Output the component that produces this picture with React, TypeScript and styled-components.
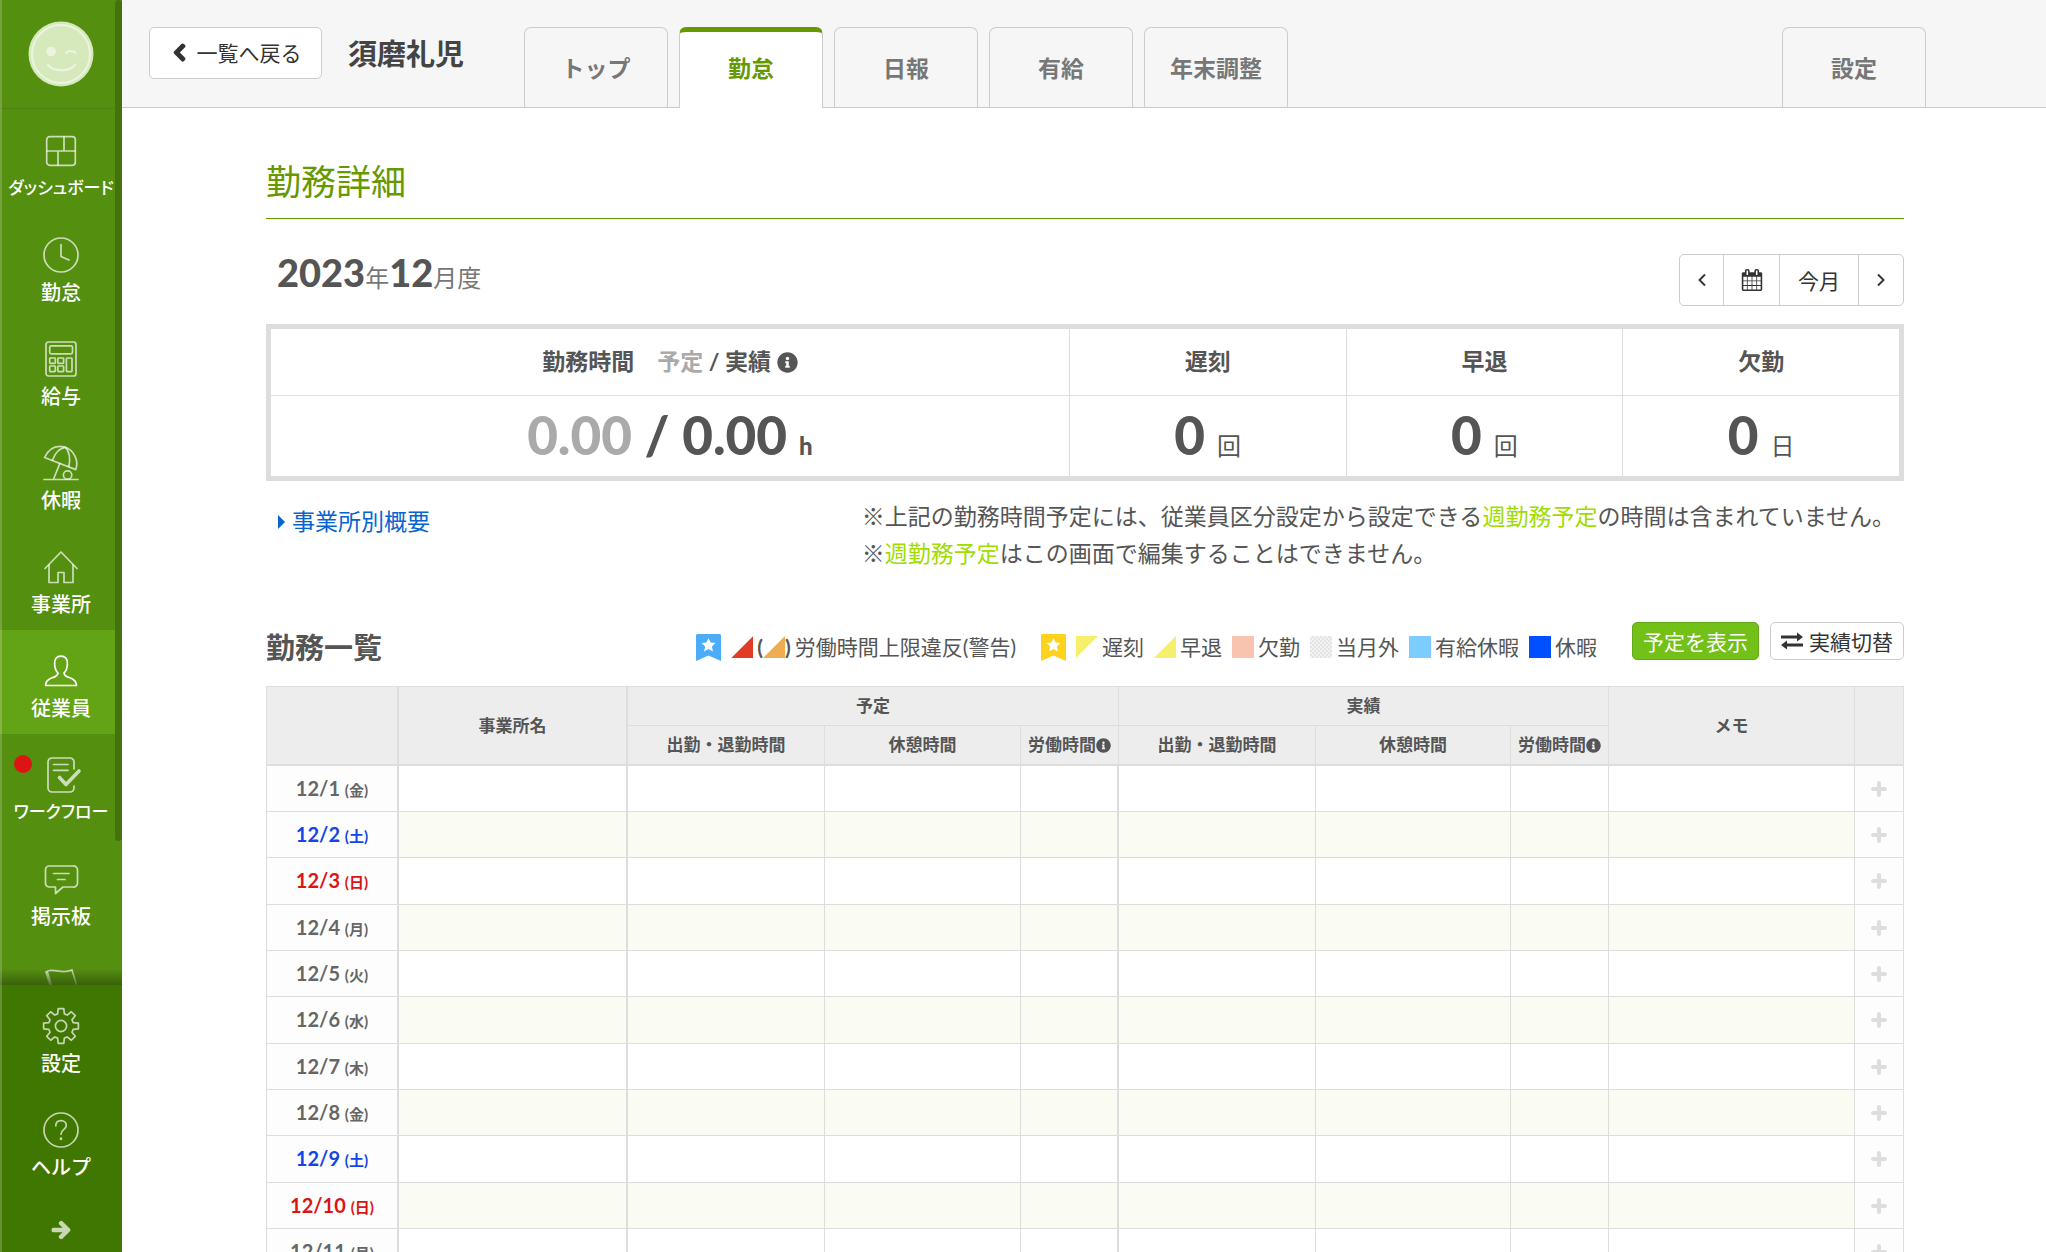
import React from 'react';
import styled, { createGlobalStyle, css } from 'styled-components';
import { FaArrowRight, FaChevronLeft, FaInfoCircle } from 'react-icons/fa';

const color = {
  text: '#555',
  muted: '#aaa',
  line: '#ddd',
  border: '#ccc',
  green: '#690',
  lime: '#9fdc00',
  link: '#0664d0',
  side: '#548f10',
  sideActive: '#63a316',
  sideDark: '#407700',
};

const GlobalStyle = createGlobalStyle`
  *, *::before, *::after { box-sizing: border-box; }
  body {
    margin: 0;
    background: #fff;
    color: ${color.text};
    font-family: Lato, "Noto Sans CJK JP", sans-serif;
    font-size: 23px;
  }
  button { font-family: inherit; cursor: pointer; }
  a { text-decoration: none; }
`;

/* ---------- shell ---------- */

const Shell = styled.div`
  display: flex;
  height: 100vh;
  overflow: hidden;
`;

const Page = styled.div`
  flex: 1;
  min-width: 0;
  display: flex;
  flex-direction: column;
`;

/* ---------- sidebar ---------- */

const Sidebar = styled.aside`
  position: relative;
  flex: none;
  width: 122px;
  display: flex;
  flex-direction: column;
  background: ${color.side};
  &::after {
    content: '';
    position: absolute;
    inset: 0 auto 0 0;
    width: 2px;
    background: rgba(255, 255, 255, 0.2);
  }
`;

const ScrollThumb = styled.div`
  position: absolute;
  top: 0;
  right: 0;
  width: 7px;
  height: 841px;
  border-radius: 4px;
  background: #44720f;
`;

const Brand = styled.a`
  flex: none;
  display: flex;
  justify-content: center;
  height: 109px;
  padding-top: 21px;
  border-bottom: 1px solid #4b8110;
`;

const Nav = styled.nav`
  flex: 1;
  min-height: 0;
  overflow: hidden;
  padding-top: 1px;
`;

const NavBottom = styled.nav`
  position: relative;
  flex: none;
  background: ${color.sideDark};
  &::before {
    content: '';
    position: absolute;
    left: 0;
    right: 0;
    bottom: 100%;
    height: 16px;
    background: linear-gradient(rgba(50, 90, 10, 0), rgba(50, 85, 10, 0.8));
  }
`;

const NavItem = styled.a<{ $active?: boolean }>`
  position: relative;
  display: flex;
  flex-direction: column;
  align-items: center;
  gap: 7px;
  height: 104px;
  padding-top: 23px;
  color: #fff;
  font-size: 20px;
  font-weight: 500;
  line-height: 24px;
  white-space: nowrap;
  background: ${(p) => (p.$active ? color.sideActive : 'transparent')};
  svg { color: ${(p) => (p.$active ? '#fff' : 'rgba(255, 255, 255, 0.7)')}; }
`;

const NavLabel = styled.span<{ $kana?: boolean }>`
  ${(p) =>
    p.$kana &&
    css`
      font-size: 17px;
      font-feature-settings: 'palt';
    `}
`;

const Dot = styled.span`
  position: absolute;
  top: 21px;
  left: 14px;
  width: 18px;
  height: 18px;
  border-radius: 50%;
  background: #dc1414;
`;

const Expand = styled.button`
  display: flex;
  align-items: center;
  justify-content: center;
  width: 100%;
  height: 59px;
  padding: 15px 0 0;
  border: 0;
  background: none;
  color: #c9d8b5;
  font-size: 20px;
  svg { overflow: visible; stroke: currentColor; stroke-width: 36; }
`;

const LineIcon = styled.svg.attrs({ viewBox: '0 0 36 36', 'aria-hidden': true })`
  flex: none;
  width: 36px;
  height: 36px;
  overflow: visible;
  fill: none;
  stroke: currentColor;
  stroke-width: 1.7;
  stroke-linejoin: round;
  stroke-linecap: round;
`;

const gearPath = (() => {
  const pts: string[] = [];
  for (let i = 0; i < 8; i += 1) {
    const base = (i * Math.PI) / 4 - Math.PI / 2;
    [
      [-0.27, 12.6],
      [-0.16, 17.6],
      [0.16, 17.6],
      [0.27, 12.6],
    ].forEach(([a, r]) => {
      pts.push(`${(18 + r * Math.cos(base + a)).toFixed(2)} ${(18 + r * Math.sin(base + a)).toFixed(2)}`);
    });
  }
  return `M${pts.join('L')}Z`;
})();

const icons = {
  dashboard: (
    <LineIcon>
      <rect x="3.7" y="3.7" width="28.6" height="28.6" rx="3" />
      <path d="M4 18H32M21 4V18M15 18V32" />
    </LineIcon>
  ),
  clock: (
    <LineIcon>
      <circle cx="18" cy="18" r="17" />
      <path d="M18 7.5V19.5L26 23" />
    </LineIcon>
  ),
  calculator: (
    <LineIcon>
      <rect x="3" y="1" width="30" height="34" rx="2.5" />
      <rect x="6.7" y="4.8" width="22.8" height="8" rx="1.5" />
      <rect x="6.7" y="17" width="5.6" height="5.4" rx="0.6" />
      <rect x="14.8" y="17" width="5.8" height="5.4" rx="0.6" />
      <rect x="6.7" y="25" width="5.6" height="5.6" rx="0.6" />
      <rect x="14.8" y="25" width="5.8" height="5.6" rx="0.6" />
      <rect x="23.4" y="17" width="5.6" height="13.6" rx="0.8" />
    </LineIcon>
  ),
  umbrella: (
    <LineIcon>
      <path d="M1.5 12.5C6 3 13 0 21 1.8C31 5 36 15 32.8 24.6Z" />
      <path d="M9.5 15C12 8 17 3 22.500 2.300C26.500 7 27.500 14 25.800 21.500" />
      <path d="M16.800 18.500L10.800 33.500M1 34.500H35" />
      <circle cx="24.600" cy="30" r="4.200" />
    </LineIcon>
  ),
  house: (
    <LineIcon>
      <path d="M2 19.500L18 3L34 19.500" />
      <path d="M6 16V33.500H15V23.500H21V33.500H30V16" />
    </LineIcon>
  ),
  person: (
    <LineIcon>
      <path d="M2.600 32.500C2.600 28.500 4.500 26.500 8.500 25C12.500 23.600 14.800 22.800 15 20C12.600 17.800 11.800 15 11.600 11C11.300 6 13.500 3.200 18 3.200S24.700 6 24.400 11C24.200 15 23.400 17.800 21 20C21.200 22.800 23.500 23.600 27.500 25C31.500 26.500 33.400 28.500 33.400 32.500Z" />
    </LineIcon>
  ),
  workflow: (
    <LineIcon>
      <path d="M31 12V5A4 4 0 0 0 27 1H9A4 4 0 0 0 5 5V31A4 4 0 0 0 9 35H27A4 4 0 0 0 31 31V29" />
      <path d="M10.500 7.500H25M10.500 13.300H25" />
      <path d="M16.500 20.500L23 27.500L36 14" strokeWidth="3.600" />
    </LineIcon>
  ),
  board: (
    <LineIcon>
      <path d="M6 5H30A4 4 0 0 1 34.500 9V22A4 4 0 0 1 30 26H20L12.500 32.500V26H6A4 4 0 0 1 2.500 22V9A4 4 0 0 1 6 5Z" />
      <path d="M10.500 12.500H26M14.500 18.500H22" />
    </LineIcon>
  ),
  flag: (
    <LineIcon>
      <path d="M4 8L12 34" strokeWidth="3" />
      <path d="M3 7C10 2 18 10 29 5L35 25C26 30 18 21 10 26" />
    </LineIcon>
  ),
  gear: (
    <LineIcon>
      <path d={gearPath} />
      <circle cx="18" cy="18" r="5.600" />
    </LineIcon>
  ),
  help: (
    <LineIcon>
      <circle cx="18" cy="18" r="17" />
      <path d="M12.800 13.800C12.800 10.500 15 8.600 18 8.600S23.300 10.600 23.300 13.400C23.300 17.500 18 17.200 18 22.200" />
      <path d="M18 26.500V27" strokeWidth="2.600" />
    </LineIcon>
  ),
};

const navItems: { label: string; icon: keyof typeof icons; active?: boolean; dot?: boolean; kana?: boolean }[] = [
  { label: 'ダッシュボード', icon: 'dashboard', kana: true },
  { label: '勤怠', icon: 'clock' },
  { label: '給与', icon: 'calculator' },
  { label: '休暇', icon: 'umbrella' },
  { label: '事業所', icon: 'house' },
  { label: '従業員', icon: 'person', active: true },
  { label: 'ワークフロー', icon: 'workflow', dot: true, kana: true },
  { label: '掲示板', icon: 'board' },
];

/* ---------- header ---------- */

const Header = styled.header`
  flex: none;
  display: flex;
  align-items: flex-start;
  height: 108px;
  padding: 27px 120px 0 27px;
  background: #f6f6f6;
  border-bottom: 1px solid ${color.border};
`;

const BackButton = styled.button`
  display: flex;
  align-items: center;
  justify-content: center;
  gap: 8px;
  flex: none;
  width: 173px;
  height: 52px;
  padding: 0 0 2px;
  border: 1px solid ${color.border};
  border-radius: 5px;
  background: #fff;
  color: #333;
  font-size: 21px;
  white-space: nowrap;
  svg { font-size: 19px; stroke: currentColor; stroke-width: 50; }
`;

const EmployeeName = styled.div`
  flex: none;
  width: 202px;
  padding-left: 26px;
  color: #444;
  font-size: 29px;
  font-weight: 700;
  line-height: 54px;
  white-space: nowrap;
`;

const Tabs = styled.nav`
  flex: 1;
  display: flex;
  gap: 11px;
`;

const Tab = styled.a<{ $active?: boolean; $end?: boolean }>`
  display: flex;
  align-items: center;
  justify-content: center;
  width: 144px;
  height: 80px;
  padding-bottom: 2px;
  border: 1px solid ${color.border};
  border-bottom: 0;
  border-radius: 7px 7px 0 0;
  color: #777;
  font-size: 23px;
  font-weight: 700;
  white-space: nowrap;
  margin-left: ${(p) => (p.$end ? 'auto' : '0')};
  ${(p) =>
    p.$active &&
    css`
      height: 81px;
      padding-bottom: 7px;
      border-top: 5px solid ${color.green};
      background: #fff;
      color: ${color.green};
    `}
`;

/* ---------- content ---------- */

const Content = styled.main`
  flex: 1;
  min-height: 0;
  overflow: auto;
  scrollbar-width: none;
  padding: 47px 142px 0 144px;
`;

const Title = styled.h1`
  margin: 0;
  padding-bottom: 11px;
  border-bottom: 1px solid ${color.green};
  color: ${color.green};
  font-size: 35px;
  font-weight: 400;
  line-height: 52px;
`;

const MonthRow = styled.div`
  display: flex;
  justify-content: space-between;
  align-items: flex-start;
  margin: 35px 0 18px;
`;

const Month = styled.div`
  padding-left: 11px;
  color: #777;
  font-size: 24px;
  line-height: 36px;
  strong {
    color: ${color.text};
    font-size: 38px;
    font-weight: 900;
  }
`;

const ButtonGroup = styled.div`
  display: flex;
  height: 52px;
  border: 1px solid ${color.border};
  border-radius: 5px;
`;

const GroupButton = styled.button<{ $width: number }>`
  display: flex;
  align-items: center;
  justify-content: center;
  width: ${(p) => p.$width}px;
  padding: 0;
  border: 0;
  background: none;
  color: #333;
  font-size: 21px;
  & + & { border-left: 1px solid ${color.border}; }
`;

const Summary = styled.table`
  width: 100%;
  table-layout: fixed;
  border-collapse: separate;
  border-spacing: 0;
  border: 5px solid ${color.line};
  text-align: center;
  th, td { padding: 0; }
  th + th, td + td { border-left: 1px solid ${color.line}; }
  th {
    height: 67px;
    padding-bottom: 5px;
    border-bottom: 1px solid ${color.line};
    font-size: 23px;
    font-weight: 700;
    svg { vertical-align: -3px; }
  }
  td {
    height: 80px;
    padding-top: 9px;
    font-size: 23px;
    line-height: 60px;
  }
`;

const Figure = styled.strong`
  font-size: 53px;
  font-weight: 900;
`;

const Planned = styled.span`
  color: ${color.muted};
`;

const Unit = styled.span<{ $bold?: boolean }>`
  margin-left: 12px;
  font-size: 24px;
  font-weight: ${(p) => (p.$bold ? 900 : 400)};
`;

const NoteRow = styled.div`
  display: flex;
  justify-content: space-between;
  margin: 17px 0 49px;
  line-height: 37px;
`;

const OfficeLink = styled.a`
  display: flex;
  align-items: center;
  gap: 7px;
  height: 37px;
  margin: 5px 0 0 12px;
  color: ${color.link};
`;

const Notes = styled.div`
  padding-right: 9px;
`;

const Lime = styled.span`
  color: ${color.lime};
`;

const SectionRow = styled.div`
  display: flex;
  align-items: center;
  height: 54px;
  margin-bottom: 11px;
`;

const SectionTitle = styled.h2`
  margin: 0 auto 0 0;
  font-size: 29px;
  font-weight: 700;
  line-height: 54px;
`;

const Legend = styled.div`
  display: flex;
  align-items: center;
  gap: 10px;
  margin-right: 35px;
  padding-bottom: 2px;
  font-size: 21px;
  line-height: 32px;
  white-space: nowrap;
`;

const LegendItem = styled.span<{ $wide?: boolean }>`
  display: flex;
  align-items: center;
  gap: 4px;
  margin-right: ${(p) => (p.$wide ? '15px' : '0')};
`;

const Paren = styled.span`
  display: flex;
  align-items: center;
  font-weight: 700;
`;

const Swatch = styled.span<{ $color: string; $shape?: 'upper' | 'lower' | 'dots' }>`
  width: 22px;
  height: 22px;
  background: ${(p) => p.$color};
  ${(p) => p.$shape === 'upper' && 'clip-path: polygon(0 0, 100% 0, 0 100%);'}
  ${(p) => p.$shape === 'lower' && 'clip-path: polygon(100% 0, 100% 100%, 0 100%);'}
  ${(p) =>
    p.$shape === 'dots' &&
    'background: repeating-conic-gradient(#e4e4e4 0 25%, #f2f2f2 0 50%) 0 0 / 4px 4px;'}
`;

const Actions = styled.div`
  display: flex;
  align-self: flex-start;
  gap: 11px;
  padding-top: 1px;
`;

const ActionButton = styled.button<{ $primary?: boolean }>`
  display: flex;
  align-items: center;
  gap: 6px;
  height: 38px;
  padding: 0 10px 1px;
  border: 1px solid ${(p) => (p.$primary ? '#62a916' : color.border)};
  border-radius: 5px;
  background: ${(p) => (p.$primary ? '#72c018' : '#fff')};
  color: ${(p) => (p.$primary ? '#fff' : '#333')};
  font-size: 21px;
  white-space: nowrap;
`;

/* ---------- work table ---------- */

const WorkTable = styled.table`
  width: 100%;
  table-layout: fixed;
  border-collapse: separate;
  border-spacing: 0;
  text-align: center;
  th, td {
    padding: 0;
    border: 0 solid ${color.line};
    border-width: 0 1px 1px 0;
  }
  thead th {
    height: 40px;
    background: #ededed;
    font-size: 17px;
    font-weight: 700;
    line-height: 24px;
    white-space: nowrap;
  }
  thead tr:first-child th { border-top-width: 1px; }
  tbody td, tbody th { height: 46px; }
  tbody tr:nth-child(3n) > * { height: 47px; }
  tbody tr:nth-child(even) td { background: #fafbf2; }
  thead tr:first-child th:first-child, tbody th { border-left-width: 1px; }
`;

const HeadCell = styled.th<{ $thick?: boolean; $last?: boolean }>`
  && {
    ${(p) => p.$thick && 'border-right-width: 2px;'}
    ${(p) => p.$last && 'border-bottom-width: 2px;'}
  }
  svg { vertical-align: -2px; }
`;

const Cell = styled.td<{ $thick?: boolean }>`
  && { ${(p) => p.$thick && 'border-right-width: 2px;'} }
`;

const dayColor = { weekday: '#666', sat: '#1445e8', sun: '#dc1414' };

const DateCell = styled.th<{ $kind: keyof typeof dayColor }>`
  && { border-right-width: 2px; }
  background: #fdfdfd;
  color: ${(p) => dayColor[p.$kind]};
  font-size: 20px;
  font-weight: 700;
  line-height: 24px;
  small { font-size: 15px; }
`;

const AddCell = styled.td`
  &&& { background: #fdfdfd; }
`;

const AddButton = styled.button`
  display: flex;
  align-items: center;
  justify-content: center;
  width: 100%;
  height: 45px;
  padding: 0;
  border: 0;
  background: none;
`;

/* ---------- small drawings ---------- */

const Smile = () => (
  <svg width="66" height="66" viewBox="0 0 66 66" role="img" aria-label="ホーム">
    <circle cx="33" cy="33" r="32.500" fill="#d6e9bc" />
    <circle cx="33" cy="33" r="29" fill="none" stroke="#ebf4df" strokeWidth="2" />
    <circle cx="23" cy="30.500" r="4.800" fill="#ebf4df" />
    <path d="M38 32C39 29.500 46.500 29.500 47.500 32M20 44C26 51 41 51 47 44" fill="none" stroke="#ebf4df" strokeWidth="2.200" strokeLinecap="round" />
  </svg>
);

const Bookmark = ({ fill }: { fill: string }) => (
  <svg width="25" height="27" viewBox="0 0 25 27" aria-hidden="true">
    <path d="M1.500 0H23.500Q25 0 25 1.500V27L12.500 21.500L0 27V1.500Q0 0 1.500 0Z" fill={fill} />
    <path d="M12.500 4L14.600 8.600L19.500 9.100L15.900 12.500L16.900 17.500L12.500 15L8.100 17.500L9.100 12.500L5.500 9.100L10.400 8.600Z" fill="#fff" />
  </svg>
);

const Angle = ({ right }: { right?: boolean }) => (
  <svg width="10" height="14" viewBox="0 0 10 14" aria-hidden="true">
    <path d={right ? 'M2 1.500L7.500 7L2 12.500' : 'M8 1.500L2.500 7L8 12.500'} fill="none" stroke="currentColor" strokeWidth="1.900" />
  </svg>
);

const Calendar = () => (
  <svg width="22" height="22" viewBox="0 0 1792 1792" fill="currentColor" aria-hidden="true">
    <path d="M192 1664h288v-288h-288v288zm352 0h320v-288h-320v288zm-352-352h288v-320h-288v320zm352 0h320v-320h-320v320zm-352-384h288v-288h-288v288zm736 736h320v-288h-320v288zm-384-736h320v-288h-320v288zm768 736h288v-288h-288v288zm-384-352h320v-320h-320v320zm-352-864v-288q0-13-9.500-22.500t-22.500-9.500h-64q-13 0-22.500 9.500t-9.500 22.500v288q0 13 9.500 22.500t22.500 9.500h64q13 0 22.500-9.500t9.500-22.500zm736 864h288v-320h-288v320zm-384-384h320v-288h-320v288zm384 0h288v-288h-288v288zm32-480v-288q0-13-9.500-22.500t-22.500-9.500h-64q-13 0-22.500 9.500t-9.500 22.500v288q0 13 9.500 22.500t22.500 9.500h64q13 0 22.500-9.500t9.500-22.500zm384-64v1280q0 52-38 90t-90 38h-1408q-52 0-90-38t-38-90v-1280q0-52 38-90t90-38h128v-96q0-66 47-113t113-47h64q66 0 113 47t47 113v96h384v-96q0-66 47-113t113-47h64q66 0 113 47t47 113v96h128q52 0 90 38t38 90z" />
  </svg>
);

const Exchange = () => (
  <svg width="22" height="18" viewBox="0 0 22 18" fill="currentColor" aria-hidden="true">
    <path d="M0 3.500H16V0.500L22 5L16 9.500V6.500H0ZM22 11.500H6V8.500L0 13L6 17.500V14.500H22Z" />
  </svg>
);

const Plus = () => (
  <svg width="16" height="16" viewBox="0 0 16 16" aria-hidden="true">
    <path d="M8 2V14M2 8H14" stroke="#ddd" strokeWidth="4" strokeLinecap="round" />
  </svg>
);

const Caret = () => (
  <svg width="7" height="14" viewBox="0 0 7 14" fill="currentColor" aria-hidden="true">
    <path d="M0 0L7 7L0 14Z" />
  </svg>
);

/* ---------- data ---------- */

const weekdays = ['日', '月', '火', '水', '木', '金', '土'];

const days = Array.from({ length: 11 }, (_, i) => {
  const w = (i + 5) % 7;
  const kind: keyof typeof dayColor = w === 0 ? 'sun' : w === 6 ? 'sat' : 'weekday';
  return { date: `12/${i + 1}`, weekday: weekdays[w], kind };
});

const columnWidths = [133, 229, 197, 196, 98, 197, 195, 98, undefined, 49];

const counts = [
  { label: '遅刻', unit: '回' },
  { label: '早退', unit: '回' },
  { label: '欠勤', unit: '日' },
];

const Col = styled.col<{ $width?: number }>`
  width: ${(p) => (p.$width ? `${p.$width}px` : 'auto')};
`;

const SummaryCol = styled.col<{ $share?: number }>`
  width: ${(p) => (p.$share ? `${p.$share}%` : 'auto')};
`;

export default function App() {
  return (
    <Shell>
      <GlobalStyle />
      <Sidebar>
        <Brand href="#">
          <Smile />
        </Brand>
        <Nav>
          {navItems.map((item) => (
            <NavItem key={item.label} href="#" $active={item.active}>
              {icons[item.icon]}
              <NavLabel $kana={item.kana}>{item.label}</NavLabel>
              {item.dot && <Dot />}
            </NavItem>
          ))}
          <NavItem href="#" aria-label="フラグ">
            {icons.flag}
          </NavItem>
        </Nav>
        <ScrollThumb />
        <NavBottom>
          <NavItem href="#">
            {icons.gear}
            <NavLabel>設定</NavLabel>
          </NavItem>
          <NavItem href="#">
            {icons.help}
            <NavLabel>ヘルプ</NavLabel>
          </NavItem>
          <Expand type="button" aria-label="メニューを開く">
            <FaArrowRight />
          </Expand>
        </NavBottom>
      </Sidebar>

      <Page>
        <Header>
          <BackButton type="button">
            <FaChevronLeft />
            一覧へ戻る
          </BackButton>
          <EmployeeName>須磨礼児</EmployeeName>
          <Tabs>
            <Tab href="#">トップ</Tab>
            <Tab href="#" $active>勤怠</Tab>
            <Tab href="#">日報</Tab>
            <Tab href="#">有給</Tab>
            <Tab href="#">年末調整</Tab>
            <Tab href="#" $end>設定</Tab>
          </Tabs>
        </Header>

        <Content>
          <Title>勤務詳細</Title>

          <MonthRow>
            <Month>
              <strong>2023</strong>年<strong>12</strong>月度
            </Month>
            <ButtonGroup>
              <GroupButton type="button" $width={43} aria-label="前月"><Angle /></GroupButton>
              <GroupButton type="button" $width={56} aria-label="カレンダー"><Calendar /></GroupButton>
              <GroupButton type="button" $width={79}>今月</GroupButton>
              <GroupButton type="button" $width={45} aria-label="翌月"><Angle right /></GroupButton>
            </ButtonGroup>
          </MonthRow>

          <Summary>
            <colgroup>
              <SummaryCol />
              <SummaryCol $share={17} />
              <SummaryCol $share={17} />
              <SummaryCol $share={17} />
            </colgroup>
            <thead>
              <tr>
                <th>
                  勤務時間　<Planned>予定</Planned> / 実績 <FaInfoCircle size={21} />
                </th>
                {counts.map((c) => <th key={c.label}>{c.label}</th>)}
              </tr>
            </thead>
            <tbody>
              <tr>
                <td>
                  <Figure><Planned>0.00</Planned> / 0.00</Figure>
                  <Unit $bold>h</Unit>
                </td>
                {counts.map((c) => (
                  <td key={c.label}>
                    <Figure>0</Figure>
                    <Unit>{c.unit}</Unit>
                  </td>
                ))}
              </tr>
            </tbody>
          </Summary>

          <NoteRow>
            <OfficeLink href="#">
              <Caret />
              事業所別概要
            </OfficeLink>
            <Notes>
              ※上記の勤務時間予定には、従業員区分設定から設定できる<Lime>週勤務予定</Lime>の時間は含まれていません。
              <br />
              ※<Lime>週勤務予定</Lime>はこの画面で編集することはできません。
            </Notes>
          </NoteRow>

          <SectionRow>
            <SectionTitle>勤務一覧</SectionTitle>
            <Legend>
              <Bookmark fill="#4dacf8" />
              <LegendItem $wide>
                <Swatch $color="#e23b26" $shape="lower" />
                <Paren>(<Swatch $color="#f0ac50" $shape="lower" />)</Paren>
                労働時間上限違反(警告)
              </LegendItem>
              <Bookmark fill="#ffd21c" />
              <LegendItem><Swatch $color="#f5ef6c" $shape="upper" />遅刻</LegendItem>
              <LegendItem><Swatch $color="#f5ef6c" $shape="lower" />早退</LegendItem>
              <LegendItem><Swatch $color="#f8c4b0" />欠勤</LegendItem>
              <LegendItem><Swatch $color="#eee" $shape="dots" />当月外</LegendItem>
              <LegendItem><Swatch $color="#7dccff" />有給休暇</LegendItem>
              <LegendItem><Swatch $color="#0050ff" />休暇</LegendItem>
            </Legend>
            <Actions>
              <ActionButton type="button" $primary>予定を表示</ActionButton>
              <ActionButton type="button"><Exchange />実績切替</ActionButton>
            </Actions>
          </SectionRow>

          <WorkTable>
            <colgroup>
              {columnWidths.map((w, i) => <Col key={i} $width={w} />)}
            </colgroup>
            <thead>
              <tr>
                <HeadCell rowSpan={2} $thick $last aria-label="日付" />
                <HeadCell rowSpan={2} $thick $last>事業所名</HeadCell>
                <HeadCell colSpan={3}>予定</HeadCell>
                <HeadCell colSpan={3}>実績</HeadCell>
                <HeadCell rowSpan={2} $last>メモ</HeadCell>
                <HeadCell rowSpan={2} $last aria-label="追加" />
              </tr>
              <tr>
                {[0, 1].map((g) => (
                  <React.Fragment key={g}>
                    <HeadCell $last>出勤・退勤時間</HeadCell>
                    <HeadCell $last>休憩時間</HeadCell>
                    <HeadCell $last>労働時間<FaInfoCircle size={15} /></HeadCell>
                  </React.Fragment>
                ))}
              </tr>
            </thead>
            <tbody>
              {days.map((d) => (
                <tr key={d.date}>
                  <DateCell scope="row" $kind={d.kind}>
                    {d.date} <small>({d.weekday})</small>
                  </DateCell>
                  <Cell $thick />
                  <Cell />
                  <Cell />
                  <Cell $thick />
                  <Cell />
                  <Cell />
                  <Cell />
                  <Cell />
                  <AddCell>
                    <AddButton type="button" aria-label={`${d.date} に追加`}>
                      <Plus />
                    </AddButton>
                  </AddCell>
                </tr>
              ))}
            </tbody>
          </WorkTable>
        </Content>
      </Page>
    </Shell>
  );
}
